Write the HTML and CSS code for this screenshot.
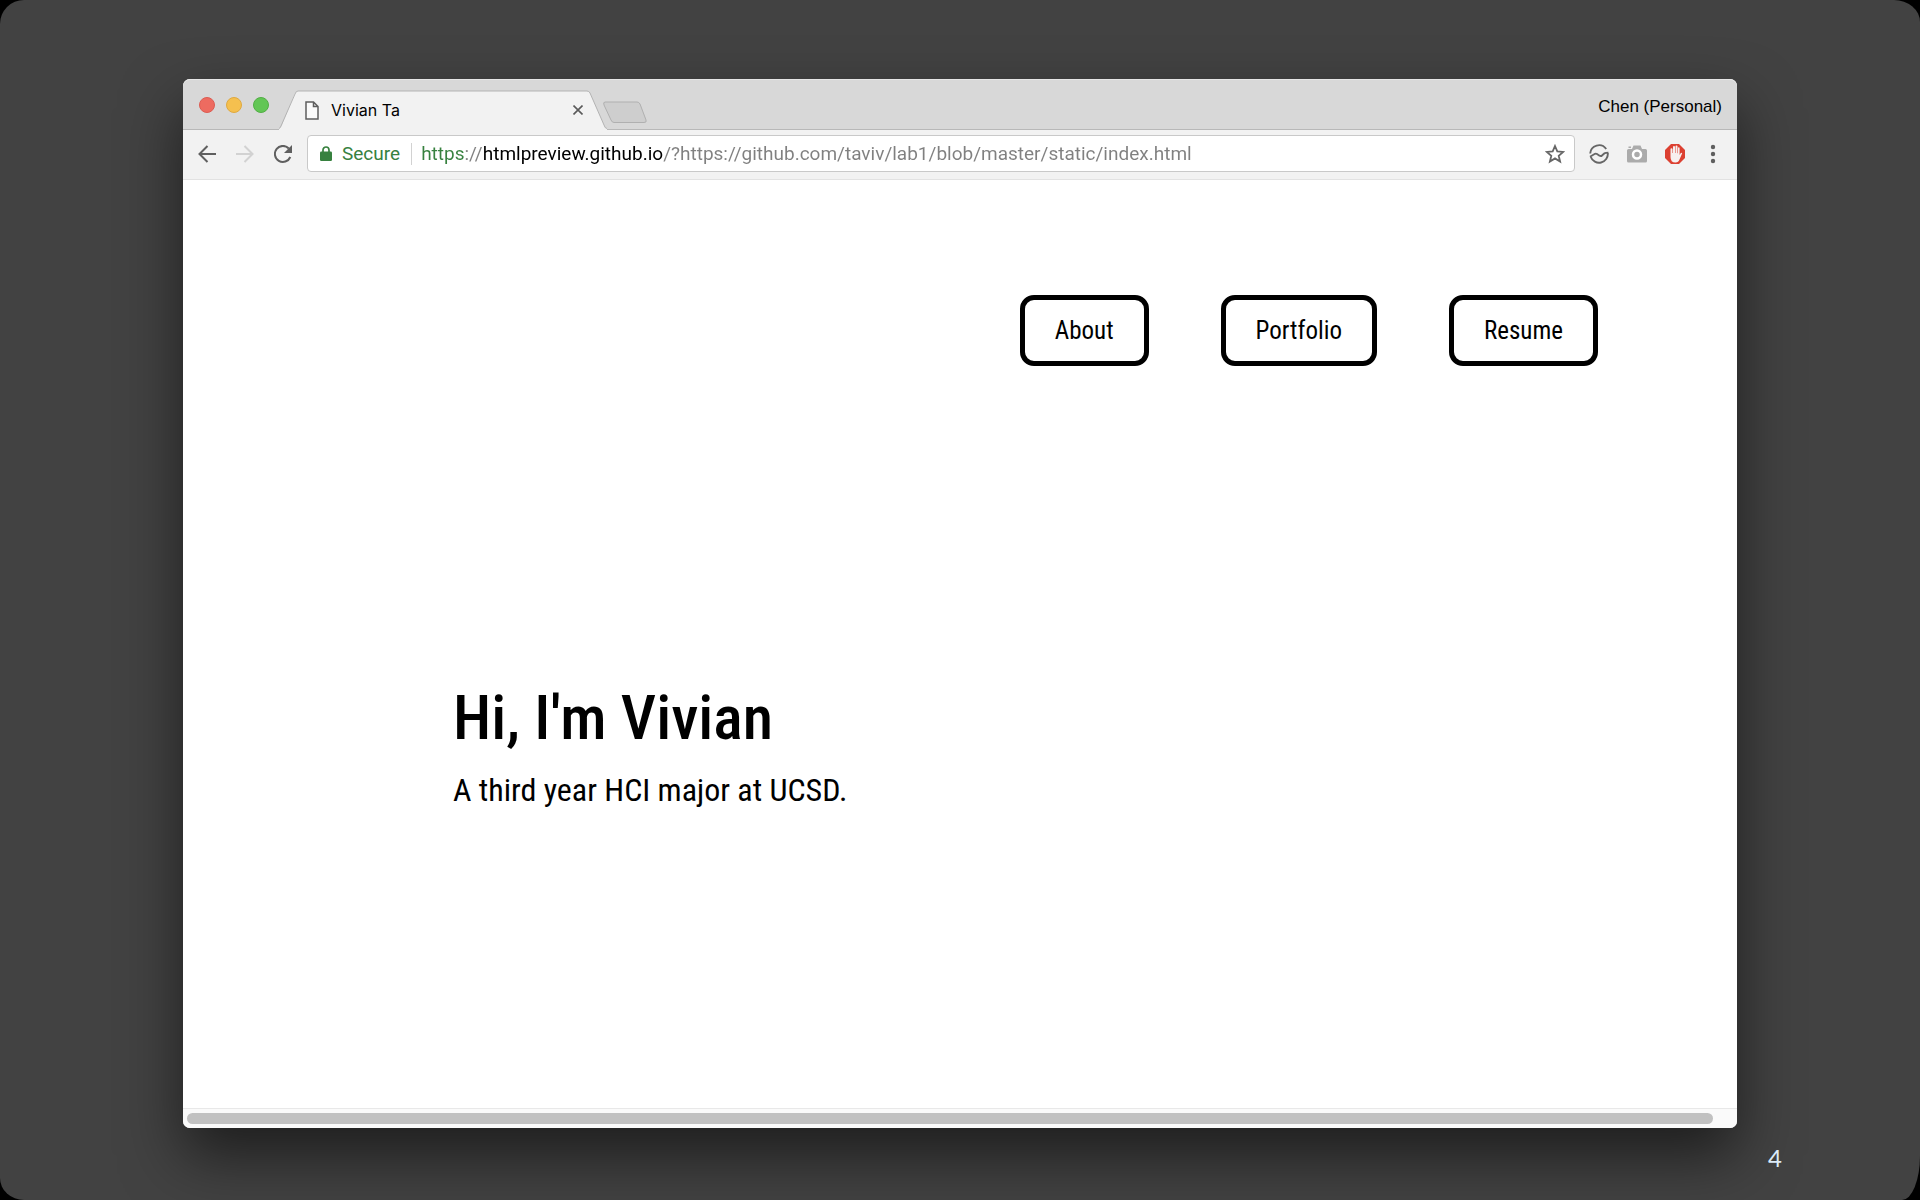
FILE: index.html
```html
<!DOCTYPE html>
<html lang="en">
<head>
<meta charset="utf-8">
<title>Vivian Ta</title>
<link rel="stylesheet" href="styles.css">
</head>
<body>
<main class="slide">
  <section class="browser">
    <header class="titlebar">
      <div class="lights">
        <button class="light light-close" aria-label="Close window"></button>
        <button class="light light-minimize" aria-label="Minimize window"></button>
        <button class="light light-zoom" aria-label="Zoom window"></button>
      </div>
      <div class="tab">
        <svg class="tab-shape" viewBox="0 0 328 40" aria-hidden="true"><path d="M0 38.500Q2 38 3 35L15.500 4Q17 1 19 1H308Q310 1 311 3L325 35Q326 38.500 328 38.500V40H0Z" fill="#f2f2f2"/><path d="M0 38.500Q1 38.500 2 36L16 4Q17 1 19 1H308Q310 1 311 3L325 35Q326 38.500 328 38.500" fill="none" stroke="#b3b3b3"/></svg>
        <svg class="tab-page" viewBox="0 0 14 19" aria-hidden="true"><path d="M1 1H8.500L13 5.500V18H1ZM8.500 1V5.500H13" fill="#fafafa" stroke="#5e5e5e" stroke-width="1.500"/></svg>
        <span class="tab-title">Vivian Ta</span>
        <button class="tab-close" aria-label="Close tab"><svg viewBox="0 0 10 10"><path d="M.5 .5L9.500 9.500M9.500 .5L.5 9.500" stroke="#5a5a5a" stroke-width="1.600"/></svg></button>
      </div>
      <button class="new-tab" aria-label="New tab"><svg viewBox="0 0 46 23"><path d="M3 1H35Q37 1 38 3L44 19Q45 21.500 42 21.500H12Q10 21.500 9 19L2 4Q1 1 3 1Z" fill="#cecece" stroke="#b0b0b0"/></svg></button>
      <span class="profile">Chen (Personal)</span>
    </header>
    <div class="toolbar">
      <div class="history">
        <button class="tool" aria-label="Back"><svg viewBox="0 0 18 18"><path d="M18 9H1.500M9.500 1L1.500 9L9.500 17" fill="none" stroke="#5f5f5f" stroke-width="2"/></svg></button>
        <button class="tool" aria-label="Forward"><svg viewBox="0 0 18 18"><path d="M0 9H16.500M8.500 1L16.500 9L8.500 17" fill="none" stroke="#d2d2d2" stroke-width="2"/></svg></button>
        <button class="tool" aria-label="Reload"><svg viewBox="0 0 18 18"><path d="M16.300 12A8 8 0 1 1 14.800 3.500" fill="none" stroke="#5f5f5f" stroke-width="2"/><path d="M18 0V8H10Z" fill="#5f5f5f"/></svg></button>
      </div>
      <div class="address">
        <svg class="lock" viewBox="0 0 12 15" aria-hidden="true"><path d="M3 6V4A3 3 0 0 1 9 4V6" fill="none" stroke="#37813f" stroke-width="1.700"/><rect y="5.500" width="12" height="9.500" rx="1.200" fill="#37813f"/></svg>
        <label class="secure" for="url">Secure</label>
        <input class="url" id="url" type="text" spellcheck="false" value="https://htmlpreview.github.io/?https://github.com/taviv/lab1/blob/master/static/index.html">
        <button class="star" aria-label="Bookmark this page"><svg viewBox="0 0 20 20"><path d="M10 2L12.300 7.400L18.200 7.900L13.700 11.800L15.100 17.500L10 14.400L4.900 17.500L6.300 11.800L1.800 7.900L7.700 7.400Z" fill="none" stroke="#666" stroke-width="1.800"/></svg></button>
      </div>
      <div class="extensions">
        <button class="extension" aria-label="Wave"><svg viewBox="0 0 20 20"><path d="M1.200 9.500A8.800 8.800 0 0 1 17.200 5M18.800 9A8.800 8.800 0 0 1 1.800 13M1 12.700L6 9.800Q7 9.300 8 10L10.500 11.700Q12 12.500 13 11.500L15.500 9.300Q16.500 8.600 19.400 8.600" fill="none" stroke="#666" stroke-width="1.900"/></svg></button>
        <button class="extension" aria-label="Camera"><svg viewBox="0 0 20 20"><path d="M0 6.500Q0 5 1.500 5H5L6.500 1.500H13.500L15 5H18.500Q20 5 20 6.500V17Q20 18.500 18.500 18.500H1.500Q0 18.500 0 17Z" fill="#ababab"/><circle cx="10" cy="10.500" r="4" fill="#ababab" stroke="#fff" stroke-width="2.500"/><path d="M1.500 2.500H4V4H1.500Z" fill="#ababab"/></svg></button>
        <button class="extension" aria-label="Ad blocker"><svg viewBox="0 0 20 20"><path d="M6 0H14L20 6V14L14 20H6L0 14V6Z" fill="#dc4031"/><path d="M5.500 11V5.200Q5.500 4.200 6.500 4.200T7.500 5.200V9H8V3Q8 2 9 2T10 3V9H10.500V2.500Q10.500 1.500 11.500 1.500T12.500 2.500V9.300H13V4.200Q13 3.300 13.800 3.300T14.600 4.200V11L15.800 9Q16.600 8.300 17.200 9.200L14.500 15.500Q13.500 18.500 10.500 18.500Q5.500 18.500 5.500 13Z" fill="#f7f0f0"/></svg></button>
        <button class="extension" aria-label="Menu"><svg viewBox="0 0 20 20"><g fill="#5f5f5f"><circle cx="10" cy="3" r="2.200"/><circle cx="10" cy="10" r="2.200"/><circle cx="10" cy="17" r="2.200"/></g></svg></button>
      </div>
    </div>
    <div class="page">
      <nav class="nav">
        <a class="nav-link" href="#about">About</a>
        <a class="nav-link" href="#portfolio">Portfolio</a>
        <a class="nav-link" href="#resume">Resume</a>
      </nav>
      <div class="intro">
        <h1 class="greeting">Hi, I'm Vivian</h1>
        <p class="tagline">A third year HCI major at UCSD.</p>
      </div>
    </div>
    <div class="scrollbar"><div class="thumb"></div></div>
  </section>
  <footer class="slide-number">4</footer>
</main>
</body>
</html>
```
FILE: styles.css
```css
* { box-sizing: border-box; }
body { margin: 0; background: #000; font-family: Roboto, sans-serif; }
button { padding: 0; border: 0; background: none; display: block; flex: none; }
svg { display: block; width: 100%; height: 100%; }

.slide {
  min-height: 100vh;
  display: flex;
  flex-direction: column;
  padding: 79px 183px 0;
  background: #424242;
  border-radius: 24px 26px 18px 24px / 24px 22px 44px 22px;
  overflow: hidden;
}
.browser {
  flex: 1;
  display: flex;
  flex-direction: column;
  border-radius: 7px;
  background: #fff;
  box-shadow: 0 28px 60px rgba(0, 0, 0, 0.55);
}

.titlebar {
  display: flex;
  height: 51px;
  padding: 0 15px 0 16px;
  background: #d8d8d8;
  border-top: 1px solid #e6e6e6;
  border-bottom: 1px solid #b8b8b8;
  border-radius: 7px 7px 0 0;
}
.lights { display: flex; gap: 11px; padding-top: 17px; }
.light { width: 16px; height: 16px; border-radius: 50%; border: 1px solid #dc5c52; background: #ed6b60; }
.light-minimize { background: #f5c04f; border-color: #dfa940; }
.light-zoom { background: #62c655; border-color: #52ae45; }
.tab {
  position: relative;
  display: flex;
  align-items: center;
  width: 328px;
  height: 40px;
  margin: 10px 0 0 10px;
  padding: 0 24px 0 26px;
}
.tab-shape { position: absolute; inset: 0; }
.tab-page { position: relative; width: 14px; height: 19px; }
.tab-title { position: relative; flex: 1; margin-left: 12px; font: 16px/20px Inter, sans-serif; }
.tab-close { position: relative; width: 10px; height: 10px; }
.new-tab { width: 46px; height: 23px; margin: 21px 0 0 -5px; }
.profile { margin-left: auto; font: 17px/54px "Liberation Sans", sans-serif; }

.toolbar {
  display: flex;
  align-items: center;
  height: 50px;
  padding: 0 14px 2px 15px;
  background: #f2f2f2;
  border-bottom: 1px solid #e2e2e2;
}
.history { display: flex; gap: 20px; margin-right: 15px; }
.tool { width: 18px; height: 18px; }
.address {
  flex: 1;
  display: flex;
  align-items: center;
  height: 37px;
  padding: 0 9px 0 12px;
  background: #fff;
  border: 1px solid #c9c9c9;
  border-radius: 4px;
}
.lock { width: 12px; height: 15px; }
.secure { margin-left: 10px; padding-right: 11px; border-right: 1px solid #d2d2d2; font-size: 19px; line-height: 22px; color: #37813f; }
.url {
  flex: 1;
  min-width: 0;
  padding: 0 0 0 9px;
  border: 0;
  font: 19px/24px Roboto, sans-serif;
  color: transparent;
  background: linear-gradient(90deg, #37813f 53px, #808080 53px 72px, #000 72px 251px, #808080 251px);
  background-clip: text;
}
.star { width: 20px; height: 20px; }
.extensions { display: flex; gap: 18px; margin-left: 14px; }
.extension { width: 20px; height: 20px; }

.page { flex: 1; padding: 115px 139px 0 270px; font-family: "Roboto Condensed", "Liberation Sans Narrow", sans-serif; }
.nav { display: flex; justify-content: flex-end; gap: 72px; }
.nav-link {
  padding: 0 30px;
  border: 5px solid #000;
  border-radius: 14px;
  font-size: 25px;
  line-height: 61px;
  color: #000;
  text-decoration: none;
}
.intro { padding-top: 312px; }
.greeting { margin: 0; font-size: 62px; font-weight: 500; line-height: 80px; }
.tagline { margin: 0; font-size: 32px; line-height: 64px; }
.scrollbar { height: 20px; padding: 4px 24px 4px 4px; background: #fafafa; border-top: 1px solid #e8e8e8; border-radius: 0 0 7px 7px; }
.thumb { height: 11px; border-radius: 6px; background: #c1c1c1; }
.slide-number { height: 72px; margin-right: -45px; padding-top: 17px; text-align: right; font: 24px/26px Lato, sans-serif; color: #dcebf8; }
```
